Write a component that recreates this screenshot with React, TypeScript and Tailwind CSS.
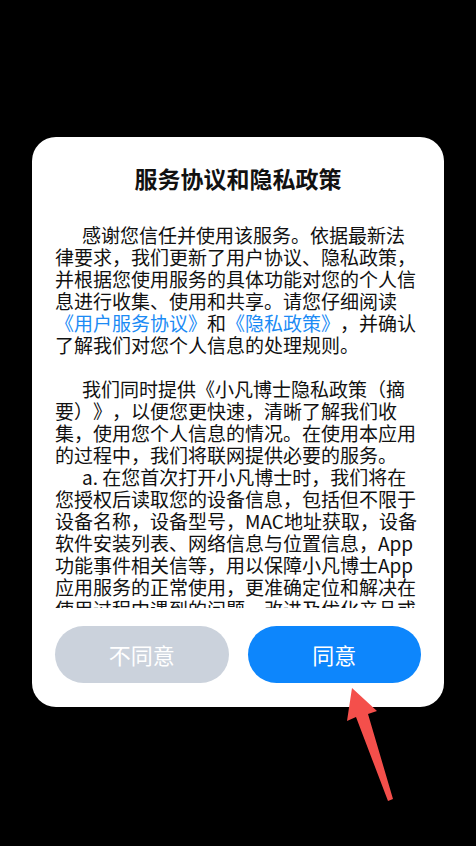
const font = { fontFamily: '"Noto Sans CJK SC", "Noto Sans", sans-serif' }

const Link = ({ children }: { children: React.ReactNode }) => (
  <span className="text-[#1b8bf5]">{children}</span>
)

const PrivacyDialog = () => {
  return (
    <div className="flex h-[570px] w-[412px] flex-col rounded-[24px] bg-white pt-[26px] pb-[24px]">
      <h1 className="text-center text-[23px] leading-[30px] font-bold text-[#111]">
        服务协议和隐私政策
      </h1>
      <div className="mt-[31px] h-[384px] overflow-hidden px-[23px] text-[19px] leading-[22px] text-[#111] [text-spacing-trim:space-all]">
        <p className="indent-[27px]">
          感谢您信任并使用该服务。依据最新法律要求，我们更新了用户协议、隐私政策，并根据您使用服务的具体功能对您的个人信息进行收集、使用和共享。请您仔细阅读
          <Link>《用户服务协议》</Link>和<Link>《隐私政策》</Link>
          ，并确认了解我们对您个人信息的处理规则。
        </p>
        <div className="h-[22px]" />
        <p className="indent-[27px]">
          我们同时提供《小凡博士隐私政策（摘要）》，以便您更快速，清晰了解我们收集，使用您个人信息的情况。在使用本应用的过程中，我们将联网提供必要的服务。
        </p>
        <p className="indent-[27px]">
          a. 在您首次打开小凡博士时，我们将在您授权后读取您的设备信息，包括但不限于设备名称，设备型号，MAC地址获取，设备软件安装列表、网络信息与位置信息，App功能事件相关信等，用以保障小凡博士App应用服务的正常使用，更准确定位和解决在使用过程中遇到的问题，改进及优化产品或服务体验。
        </p>
      </div>
      <div className="mt-[18px] flex gap-[19px] px-[23px]">
        <button className="h-[57px] flex-1 rounded-full bg-[#cbd2dc] text-[22px] text-white">
          不同意
        </button>
        <button className="h-[57px] flex-1 rounded-full bg-[#0d86fc] text-[22px] text-white">
          同意
        </button>
      </div>
    </div>
  )
}

export default function App() {
  return (
    <div
      className="relative flex min-h-[846px] w-full flex-col items-center bg-black pt-[137px]"
      style={font}
    >
      <PrivacyDialog />
      <svg
        className="pointer-events-none absolute left-0 top-0"
        width="476"
        height="846"
        viewBox="0 0 476 846"
      >
        <polygon
          points="352,688 377,711 368,714 393,799 388,801 356,717 347,721"
          fill="#f44f4b"
        />
      </svg>
    </div>
  )
}
